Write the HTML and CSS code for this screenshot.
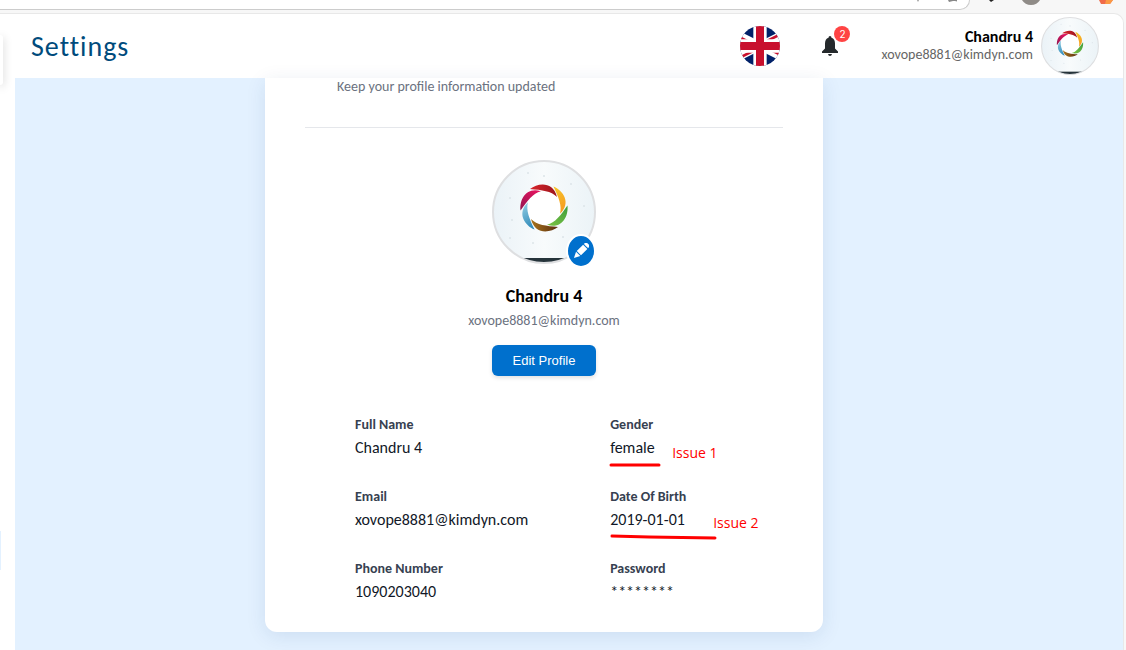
FILE: index.html
```html
<!DOCTYPE html>
<html lang="en">
<head>
<meta charset="utf-8">
<meta name="viewport" content="width=device-width, initial-scale=1">
<title>Settings</title>
<link rel="stylesheet" href="styles.css">
</head>
<body>
<svg class="defs" aria-hidden="true">
  <defs>
    <path id="blade" d="M-14-19C-6-25 9-27 13-11C7-17-2-18-14-19Z"/>
    <linearGradient id="paper" x1="0" y1="0" x2="1" y2="0"><stop offset="0" stop-color="#eaf2f7"/><stop offset=".5" stop-color="#f8fbfc"/><stop offset="1" stop-color="#ebf3f7"/></linearGradient>
    <linearGradient id="red" x1="0" x2="1"><stop offset="0" stop-color="#d9252c"/><stop offset="1" stop-color="#9c151c"/></linearGradient>
    <linearGradient id="gold" x1="0" x2="1"><stop offset="0" stop-color="#f7c62b"/><stop offset="1" stop-color="#f69a20"/></linearGradient>
    <linearGradient id="green" x1="0" x2="1"><stop offset="0" stop-color="#3c9c3c"/><stop offset="1" stop-color="#79c143"/></linearGradient>
    <linearGradient id="brown" x1="0" x2="1"><stop offset="0" stop-color="#5a2c10"/><stop offset="1" stop-color="#a8741c"/></linearGradient>
    <linearGradient id="blue" x1="0" x2="1"><stop offset="0" stop-color="#2583b5"/><stop offset="1" stop-color="#8cc9e0"/></linearGradient>
    <linearGradient id="pink" x1="0" x2="1"><stop offset="0" stop-color="#8f1550"/><stop offset="1" stop-color="#e8145f"/></linearGradient>
    <clipPath id="disc"><circle cx="52" cy="52" r="51"/></clipPath>
    <clipPath id="pinwheel"><path d="M30 15h30v15zv15H0zH0V0zV0h30z"/></clipPath>
    <symbol id="portrait" viewBox="0 0 104 104">
      <g clip-path="url(#disc)">
        <rect width="104" height="104" fill="url(#paper)"/>
        <g fill="#dce4e9"><circle cx="20" cy="60" r="1"/><circle cx="18" cy="38" r="1"/><circle cx="52" cy="16" r="1"/><circle cx="36" cy="13" r="1"/><circle cx="79" cy="24" r="1"/><circle cx="92" cy="46" r="1"/><circle cx="18" cy="78" r="1"/><circle cx="71" cy="77" r="1"/><circle cx="41" cy="83" r="1"/></g>
        <circle cx="52" cy="48" r="18" fill="#fff"/>
        <g transform="translate(52 48)">
          <use href="#blade" fill="url(#red)"/>
          <use href="#blade" fill="url(#gold)" transform="rotate(60)"/>
          <use href="#blade" fill="url(#green)" transform="rotate(120)"/>
          <use href="#blade" fill="url(#brown)" transform="rotate(180)"/>
          <use href="#blade" fill="url(#blue)" transform="rotate(240)"/>
          <use href="#blade" fill="url(#pink)" transform="rotate(300)"/>
        </g>
        <rect y="98" width="104" height="6" fill="#26343b"/>
      </g>
      <circle cx="52" cy="52" r="51" fill="none" stroke="#dedfe1" stroke-width="2"/>
    </symbol>
  </defs>
</svg>

<div class="browser-bar">
  <div class="address"><svg width="40" height="8" viewBox="0 0 40 8" aria-hidden="true"><path d="M0 0h2l-1 2z" fill="#999"/><path d="M31 0h10l1 2-4-1h-2l-4 1z" fill="#888"/></svg></div>
  <svg class="browser-icons" width="156" height="8" viewBox="0 0 156 8" aria-hidden="true"><path d="M19 0h5l-3 2z" fill="#222"/><path d="M52 0h18q-3 5-9 5t-9-5z" fill="#8f8b87"/><path d="M129 0h14l-3 4h-9z" fill="#f06a4a"/><path d="M136 0h7l-3 4h-5z" fill="#fb9a45"/></svg>
</div>

<div class="app">
  <aside class="rail"><div class="rail-handle"></div><div class="rail-active"></div></aside>
  <header class="topbar">
    <h1 class="title">Settings</h1>
    <button class="flag" aria-label="Language: English">
      <svg viewBox="15 0 30 30" width="40" height="40" aria-hidden="true">
        <path fill="#012169" d="M0 0h60v30H0z"/>
        <path stroke="#fff" stroke-width="6" d="M0 0l60 30M60 0L0 30"/>
        <path stroke="#c8102e" stroke-width="4" clip-path="url(#pinwheel)" d="M0 0l60 30M60 0L0 30"/>
        <path stroke="#fff" stroke-width="10" d="M30 0v30M0 15h60"/>
        <path stroke="#c8102e" stroke-width="6" d="M30 0v30M0 15h60"/>
      </svg>
    </button>
    <button class="bell" aria-label="Notifications">
      <svg width="18" height="20" viewBox="0 0 18 20" aria-hidden="true"><path fill="#25292c" d="M9 0q1.500 0 1.500 1.700Q14 3 14 7.500v5l3 3V17H1v-1.500l3-3v-5Q4 3 7.500 1.700 7.500 0 9 0zM7 18h4q-.4 2-2 2t-2-2z"/></svg>
      <span class="badge">2</span>
    </button>
    <div class="account">
      <div class="account-text">
        <strong>Chandru 4</strong>
        <span>xovope8881@kimdyn.com</span>
      </div>
      <svg class="account-photo" width="58" height="58" role="img" aria-label="Profile photo"><use href="#portrait"/></svg>
    </div>
  </header>

  <main class="content">
    <section class="card">
      <div class="card-head"><p>Keep your profile information updated</p></div>
      <div class="profile">
        <div class="photo">
          <svg width="104" height="104" role="img" aria-label="Profile photo"><use href="#portrait"/></svg>
          <button class="photo-edit" aria-label="Change photo">
            <svg width="16" height="16" viewBox="0 0 16 16" aria-hidden="true"><g fill="#fff" transform="rotate(45 8 8)"><rect x="5" y="-2" width="6" height="3" rx="1"/><path d="M5 2h6v9H5zM5 12h6l-3 6z"/></g></svg>
          </button>
        </div>
        <h2>Chandru 4</h2>
        <p>xovope8881@kimdyn.com</p>
        <button class="edit">Edit Profile</button>
      </div>
      <dl class="details">
        <div><dt>Full Name</dt><dd>Chandru 4</dd></div>
        <div class="marked">
          <dt>Gender</dt><dd>female</dd>
          <svg class="stroke" width="56" height="6" aria-hidden="true"><path d="M2 3H50" /></svg>
          <span class="note note-one">Issue 1</span>
        </div>
        <div><dt>Email</dt><dd>xovope8881@kimdyn.com</dd></div>
        <div class="marked">
          <dt>Date Of Birth</dt><dd>2019-01-01</dd>
          <svg class="stroke" width="112" height="6" aria-hidden="true"><path d="M3 2L40 3L106 4" /></svg>
          <span class="note note-two">Issue 2</span>
        </div>
        <div><dt>Phone Number</dt><dd>1090203040</dd></div>
        <div><dt>Password</dt><dd class="secret">********</dd></div>
      </dl>
    </section>
  </main>
</div>
</body>
</html>
```

FILE: styles.css
```css
* { box-sizing: border-box; }
body {
  margin: 0;
  min-height: 100vh;
  display: flex;
  flex-direction: column;
  background: #f7f7f7;
  color: #111827;
  font-family: Carlito, Lato, sans-serif;
  font-size: 16px;
}
h1, h2, p, dl, dd { margin: 0; }
button { border: 0; padding: 0; cursor: pointer; }
svg { display: block; }
.defs { position: absolute; width: 0; height: 0; }

.browser-bar { display: flex; height: 13px; align-items: flex-start; }
.address {
  flex: 1;
  display: flex;
  justify-content: flex-end;
  height: 10px;
  padding-right: 12px;
  background: #fff;
  border: solid #ccc;
  border-width: 0 1px 1px 0;
  border-radius: 0 0 16px 0;
}

.app {
  flex: 1;
  display: grid;
  grid-template-columns: 15px 1fr;
  grid-template-rows: 64px 1fr;
  margin-right: 2px;
  background: #fff;
  border: solid #e8e8e8;
  border-width: 1px 1px 0 0;
  border-radius: 0 10px 0 0;
}
.rail { grid-row: 1 / 3; overflow: hidden; }
.rail-handle {
  width: 3px;
  height: 50px;
  margin-top: 21px;
  border-radius: 0 8px 8px 0;
  background: #fff;
  box-shadow: 0 2px 8px rgba(0, 0, 0, .25);
}
.rail-active { width: 1px; height: 39px; margin-top: 446px; background: #e3f1ff; }

.topbar { display: flex; align-items: center; padding: 0 24px 0 16px; }
.title { flex: 1; color: #004b7c; font-size: 28px; font-weight: 400; letter-spacing: 1px; }
.flag { width: 40px; height: 40px; border-radius: 50%; overflow: hidden; background: none; }
.bell { position: relative; margin: 0 42px 0 41px; background: none; }
.badge {
  position: absolute;
  top: -10px;
  right: -11px;
  width: 16px;
  border-radius: 50%;
  background: #ff4444;
  color: #fff;
  font: 10px/16px Inter, sans-serif;
}
.account { display: flex; align-items: center; gap: 8px; }
.account-text { display: flex; flex-direction: column; text-align: right; line-height: 18px; }
.account-text strong { color: #000; }
.account-text span { color: #666; font-size: 14px; }

.content { padding: 0 50px 18px 0; background: #e3f1ff; }
.card {
  max-width: 558px;
  margin: 0 auto;
  padding: 0 40px 30px;
  background: #fff;
  border-radius: 0 0 12px 12px;
  box-shadow: 0 4px 20px rgba(0, 60, 120, .1);
}
.card-head { padding: 0 32px 31px; border-bottom: 1px solid #e5e7eb; }
.card-head p { color: #6b7280; font-size: 14px; line-height: 18px; }
.profile { display: flex; flex-direction: column; align-items: center; padding-top: 32px; }
.photo { position: relative; margin-bottom: 20px; }
.photo-edit {
  position: absolute;
  right: 0;
  bottom: -4px;
  width: 30px;
  height: 34px;
  display: grid;
  place-items: center;
  border: 2px solid #fff;
  border-radius: 50%;
  background: #0070cd;
}
.profile h2 { color: #000; font-size: 18px; line-height: 24px; }
.profile p { margin: 3px 0 14px; color: #6b7280; font-size: 14px; line-height: 20px; }
.edit {
  min-width: 104px;
  padding: 0 16px;
  border-radius: 6px;
  background: #0070cd;
  color: #fff;
  font: 13px/31px "Liberation Sans", Arial, sans-serif;
  box-shadow: 0 2px 4px rgba(0, 0, 0, .12);
}
.details {
  display: grid;
  grid-template-columns: 1fr 1fr;
  gap: 29px 82px;
  padding: 39px 0 0 50px;
}
.details dt { color: #374151; font-size: 14px; font-weight: 700; line-height: 20px; }
.details dd { margin-top: 3px; line-height: 20px; white-space: nowrap; }
.marked { position: relative; }
.stroke { position: absolute; left: -1px; top: 47px; fill: none; stroke: #f00; stroke-width: 3px; stroke-linecap: round; }
.note { position: absolute; color: #f00; font: 14px/20px "Open Sans", sans-serif; white-space: nowrap; }
.note-one { left: 62px; top: 28px; }
.note-two { left: 103px; top: 26px; }
```
